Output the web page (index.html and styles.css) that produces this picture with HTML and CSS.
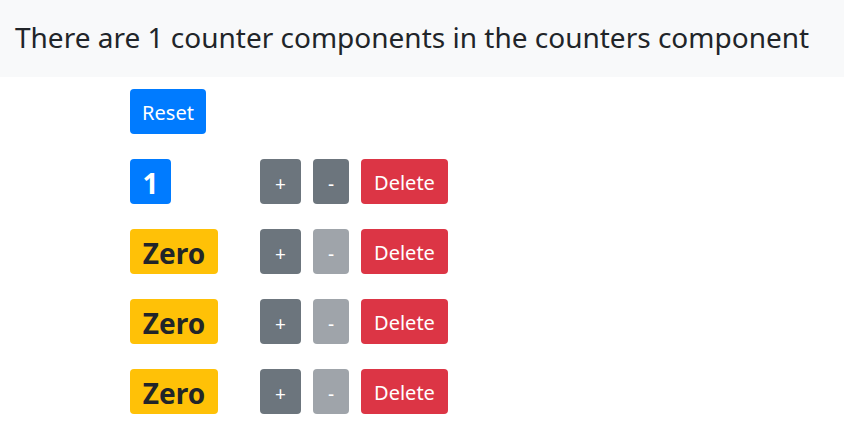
FILE: index.html
```html
<!DOCTYPE html>
<html>
<head>
<meta charset="utf-8">
<link rel="stylesheet" href="styles.css">
</head>
<body>
<nav class="navbar">
  <span class="brand">There are 1 counter components in the counters component</span>
</nav>
<main class="main">
  <div class="reset-row">
    <button class="btn btn-primary">Reset</button>
  </div>
  <div class="counter">
    <span class="badge badge-primary">1</span>
    <div class="actions">
      <button class="btn btn-secondary btn-sign">+</button>
      <button class="btn btn-secondary btn-sign">-</button>
      <button class="btn btn-danger">Delete</button>
    </div>
  </div>
  <div class="counter">
    <span class="badge badge-warning">Zero</span>
    <div class="actions">
      <button class="btn btn-secondary btn-sign">+</button>
      <button class="btn btn-secondary btn-sign disabled">-</button>
      <button class="btn btn-danger">Delete</button>
    </div>
  </div>
  <div class="counter">
    <span class="badge badge-warning">Zero</span>
    <div class="actions">
      <button class="btn btn-secondary btn-sign">+</button>
      <button class="btn btn-secondary btn-sign disabled">-</button>
      <button class="btn btn-danger">Delete</button>
    </div>
  </div>
  <div class="counter">
    <span class="badge badge-warning">Zero</span>
    <div class="actions">
      <button class="btn btn-secondary btn-sign">+</button>
      <button class="btn btn-secondary btn-sign disabled">-</button>
      <button class="btn btn-danger">Delete</button>
    </div>
  </div>
</main>
</body>
</html>
```
FILE: styles.css
```css
* { box-sizing: border-box; }
body {
  margin: 0;
  font-family: "Noto Sans", "Open Sans", sans-serif;
  color: #212529;
  background: #fff;
}
.navbar {
  background: #f8f9fa;
  height: 77px;
  display: flex;
  align-items: center;
  padding: 0 0 4px 15px;
}
.brand {
  font-size: 28px;
  font-weight: 400;
  color: #212529;
  white-space: nowrap;
}
.main {
  padding: 12px 0 0 130px;
  display: flex;
  flex-direction: column;
  gap: 25px;
}
.reset-row { display: flex; }
.counter {
  display: grid;
  grid-template-columns: 130px auto;
  align-items: center;
}
.actions {
  display: flex;
  gap: 12px;
}
.btn {
  border: none;
  border-radius: 4px;
  height: 45px;
  font-family: inherit;
  font-size: 20px;
  color: #fff;
  padding: 2px 13px 0;
  line-height: 43px;
}
.btn-primary { background: #007bff; width: 76px; padding: 2px 0 0; }
.btn-secondary { background: #6c757d; }
.btn-danger { background: #dc3545; width: 87px; padding: 2px 0 0; }
.btn-sign {
  width: 41px;
  padding: 4px 0 0;
  font-size: 19px;
}
.btn-sign + .btn-sign { width: 36px; }
.disabled { opacity: 0.65; }
.badge {
  display: inline-flex;
  align-items: center;
  justify-content: center;
  height: 45px;
  border-radius: 4px;
  font-size: 28px;
  font-weight: 700;
  padding: 2px 0 0;
  justify-self: start;
}
.badge-primary { background: #007bff; color: #fff; width: 41px; }
.badge-warning { background: #ffc107; color: #212529; width: 88px; }
```
